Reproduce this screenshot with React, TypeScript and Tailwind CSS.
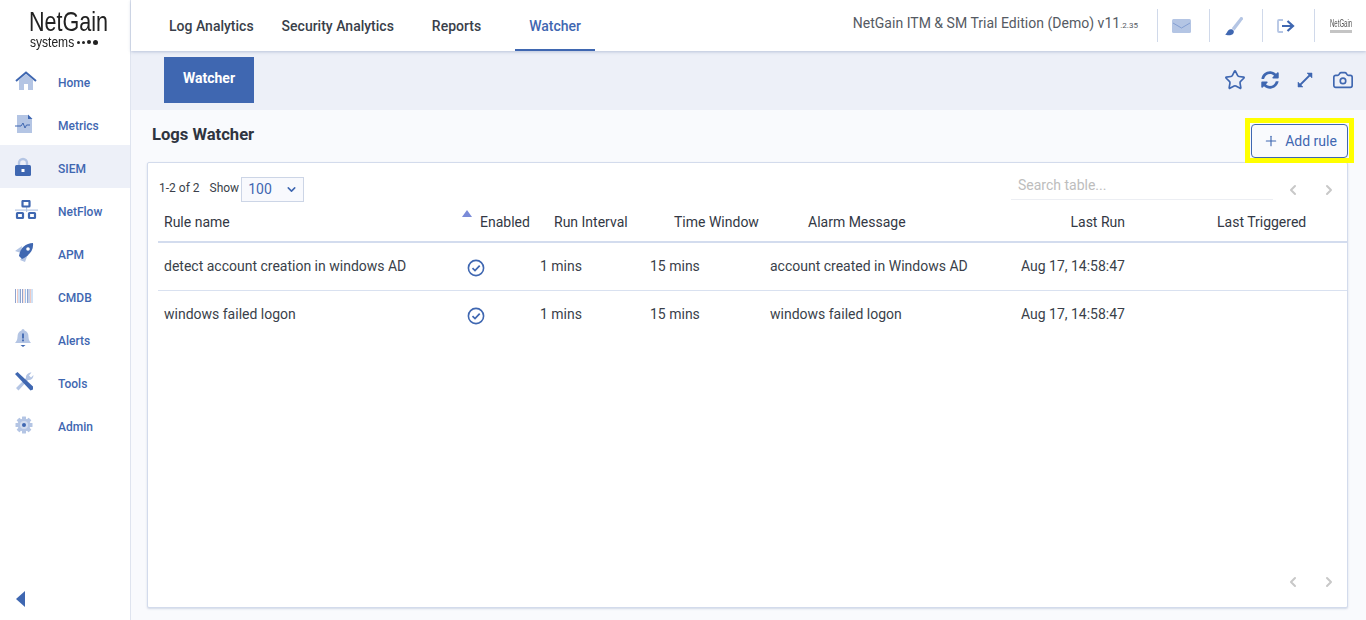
import React from "react";
import { Star, Camera, Plus, ChevronLeft, ChevronRight, ChevronDown } from "lucide-react";
import { FaSyncAlt } from "react-icons/fa";

const B = "#3f67b1";
const L = "#b4c5e4";

const HomeI = () => (
  <svg width="22" height="20" viewBox="0 0 22 20">
    <path d="M4 9 L11 3 L18 9 V19 H13 V13 H9 V19 H4 Z" fill={L} />
    <path d="M1 10 L11 1.5 L21 10" fill="none" stroke={B} strokeWidth="2" />
  </svg>
);
const MetricsI = () => (
  <svg width="22" height="20" viewBox="0 0 22 20">
    <path d="M2 1 H13 L17 5 V19 H2 Z" fill={L} />
    <path d="M13 0.5 L17.5 5 H13 Z" fill={B} />
    <path d="M0 12 H6 L8 9 L10 14 L11.5 11 H15" fill="none" stroke={B} strokeWidth="1" />
  </svg>
);
const LockI = () => (
  <svg width="22" height="20" viewBox="0 0 22 20">
    <path d="M4 9 V6 a4 4 0 0 1 8 0 V9" fill="none" stroke={L} strokeWidth="2.4" />
    <rect x="0" y="8" width="16" height="11" rx="1.5" fill={B} />
    <rect x="6.5" y="12" width="3" height="3" fill="#fff" />
  </svg>
);
const NetI = () => (
  <svg width="24" height="20" viewBox="0 0 24 20">
    <rect x="0" y="9.5" width="23" height="1.2" fill={L} />
    <rect x="11" y="6" width="1.2" height="6" fill={L} />
    <rect x="7.5" y="1" width="7" height="5.5" rx="0.5" fill="#fff" stroke={B} strokeWidth="2.2" />
    <rect x="2" y="13" width="6" height="5" rx="0.5" fill="#fff" stroke={B} strokeWidth="2.2" />
    <rect x="14" y="13" width="6" height="5" rx="0.5" fill="#fff" stroke={B} strokeWidth="2.2" />
  </svg>
);
const RocketI = () => (
  <svg width="22" height="20" viewBox="0 0 22 20">
    <path d="M0 8 L7 3 L6 10 Z M9 12 L13 11 L10 19 L5 17 Z" fill={L} />
    <path d="M4 13 C5 5 11 0 18 0 C19 7 14 13 7 16 Z" fill={B} />
    <circle cx="13" cy="6" r="1.8" fill="#fff" />
  </svg>
);
const BarI = () => (
  <svg width="22" height="14" viewBox="0 0 22 14">
    {[0, 2, 3.5, 5, 7, 8.5, 10, 12, 13.5, 15, 16.5].map((x, i) => (
      <rect key={x} x={x} y="0" width="1" height="14" fill={["#8fa3cf", "#f0c8c0", "#9fc4ee", "#8fa3cf"][i % 4]} />
    ))}
  </svg>
);
const BellI = () => (
  <svg width="22" height="20" viewBox="0 0 22 20">
    <path d="M6.5 1.5 a1.5 1.5 0 0 1 3 0 C12.5 2.5 13.5 5 13.5 8 C13.5 11 15 13 16 14 H0 C1 13 2.5 11 2.5 8 C2.5 5 3.5 2.5 6.5 1.5 Z" fill={L} />
    <rect x="7.1" y="4.5" width="1.8" height="5" fill={B} />
    <rect x="7.1" y="10.5" width="1.8" height="1.8" fill={B} />
    <path d="M5.5 16 H10.5 L8 18 Z" fill={B} />
  </svg>
);
const ToolsI = () => (
  <svg width="22" height="20" viewBox="0 0 22 20">
    <path d="M1 16 L11 6 C10.5 3 13 0.5 16.5 0.5 L14 3.5 L16 5.5 L18.5 3 C18.5 6.5 16 8.5 13 8 L3.5 18.5 Z" fill={L} />
    <path d="M0 2 L2.5 0 L18 14.5 L18 17.5 L15.5 18.5 Z" fill={B} />
  </svg>
);
const GearI = () => (
  <svg width="22" height="20" viewBox="0 0 22 20">
    <g fill={L}>
      <circle cx="9" cy="10" r="6.5" />
      {[0, 45, 90, 135].map((a) => (
        <rect key={a} x="7" y="1.5" width="4" height="17" transform={`rotate(${a} 9 10)`} rx="0.5" />
      ))}
    </g>
    <circle cx="9" cy="10" r="4" fill="#fff" fillOpacity="0.4" />
    <circle cx="9" cy="10" r="2" fill={B} />
  </svg>
);

const nav: [string, React.FC, boolean?][] = [
  ["Home", HomeI],
  ["Metrics", MetricsI],
  ["SIEM", LockI, true],
  ["NetFlow", NetI],
  ["APM", RocketI],
  ["CMDB", BarI],
  ["Alerts", BellI],
  ["Tools", ToolsI],
  ["Admin", GearI],
];

const Check = () => (
  <svg width="18" height="18" viewBox="0 0 18 18" fill="none">
    <circle cx="9" cy="9" r="7.6" stroke={B} strokeWidth="1.6" />
    <path d="M5.5 9.2 L8 11.6 L12.7 6.6" stroke={B} strokeWidth="1.7" />
  </svg>
);

const rows = [
  ["detect account creation in windows AD", "account created in Windows AD"],
  ["windows failed logon", "windows failed logon"],
];

const cols = "grid grid-cols-[302px_80px_110px_120px_230px_135px_212px]";

export default function App() {
  return (
    <div className="flex h-[620px] w-[1366px] overflow-hidden bg-white font-['Roboto',sans-serif] text-[14px] text-[#3a3f4a]">
      <aside className="flex w-[131px] shrink-0 flex-col border-r border-[#dfe4ef] bg-white">
        <div className="flex h-[59px] flex-col items-start pt-[8px] pl-[29px] leading-none text-[#222]">
          <span className="block w-[78px] origin-left scale-x-[.77] whitespace-nowrap font-['Liberation_Sans',sans-serif] text-[28px] leading-[28px]">NetGain</span>
          <span className="ml-[1px] flex items-center font-['Liberation_Sans',sans-serif] text-[14px] leading-[12px]">
            <span className="block w-[47px] origin-left scale-x-[.86] whitespace-nowrap">systems</span>
            <span className="flex items-center gap-[2px]">
              <i className="h-[3px] w-[3px] rounded-full bg-[#222]" />
              <i className="h-[3px] w-[3px] rounded-full bg-[#222]" />
              <i className="h-[4px] w-[4px] rounded-full bg-[#222]" />
              <i className="h-[5px] w-[5px] rounded-full bg-[#222]" />
            </span>
          </span>
        </div>
        <nav className="flex flex-col">
          {nav.map(([label, Icon, active]) => (
            <div key={label} className={`flex h-[43px] items-center pl-[15px] ${active ? "bg-[#edf0f8]" : ""}`}>
              <span className="flex w-[43px] items-center">
                <Icon />
              </span>
              <span className="pt-[5px] text-[12px] font-medium text-[#3f67b1]">{label}</span>
            </div>
          ))}
        </nav>
        <div className="mt-auto pb-[13px] pl-[16px]">
          <svg width="10" height="16" viewBox="0 0 10 16">
            <path d="M9 0 V16 L0 8 Z" fill={B} />
          </svg>
        </div>
      </aside>

      <div className="flex min-w-0 flex-1 flex-col">
        <header className="z-10 flex h-[51px] shrink-0 items-center bg-white pl-[38px] shadow-[0_1px_3px_rgba(120,140,180,0.45)]">
          <div className="flex h-full items-center text-[14px] font-medium text-[#3a3f4a]">
            <span className="mr-[28px] pt-[1px]">Log Analytics</span>
            <span className="mr-[38px] pt-[1px]">Security Analytics</span>
            <span className="mr-[34px] pt-[1px]">Reports</span>
            <span className="flex h-full w-[80px] items-center justify-center border-b-2 border-[#3f67b1] pt-[3px] text-[#3f67b1]">Watcher</span>
          </div>
          <div className="ml-auto flex h-full items-center">
            <span className="mr-[19px] pb-[5px] text-[14px] tracking-[0.02px] text-[#555a63]">
              NetGain ITM &amp; SM Trial Edition (Demo) v11<span className="text-[8px]">.2.35</span>
            </span>
            <div className="flex h-[33px] w-[52px] items-center justify-center border-l border-[#d0d9ea] pr-[5px]">
              <svg width="19" height="14" viewBox="0 0 19 14">
                <rect width="19" height="14" rx="1.5" fill={L} />
                <path d="M1 4 L9.5 9 L18 4" fill="none" stroke="#7f9bd0" strokeWidth="0.9" />
              </svg>
            </div>
            <div className="flex h-[33px] w-[53px] items-center justify-center border-l border-[#d0d9ea] pr-[5px]">
              <svg width="20" height="20" viewBox="0 0 18 18">
                <path d="M7 11 L15 1 C16.5 0.5 17.5 1.5 17 3 L9.5 13 Z" fill={L} />
                <path d="M1 16.5 C3 16 3 12 6 12 C8.5 12 9.5 14 8.5 15.5 C7.5 17.5 3 18 1 16.5 Z" fill={B} />
              </svg>
            </div>
            <div className="flex h-[33px] w-[52px] items-center justify-center border-l border-[#d0d9ea] pr-[5px]">
              <svg width="18" height="14" viewBox="0 0 18 14" fill="none">
                <path d="M6 1 H2 a1 1 0 0 0 -1 1 V12 a1 1 0 0 0 1 1 H6" stroke={L} strokeWidth="1.8" />
                <path d="M5 7 H15 M10.5 2 L16 7 L10.5 12" stroke={B} strokeWidth="2.2" />
              </svg>
            </div>
            <div className="flex h-[33px] w-[52px] flex-col items-center justify-center border-l border-[#d0d9ea] leading-none">
              <span className="block w-[22px] origin-left scale-x-[.55] whitespace-nowrap font-['Liberation_Sans',sans-serif] text-[11px] leading-[11px] text-[#555] blur-[0.4px]">NetGain</span>
              <span className="mt-[1px] h-[3px] w-[22px] bg-[#c4c4c4] blur-[0.6px]" />
            </div>
          </div>
        </header>

        <div className="flex h-[59px] shrink-0 items-start bg-[#edf0f8] pl-[33px] pr-[12px]">
          <div className="mt-[6px] flex h-[46px] w-[90px] items-center justify-center bg-[#3f67b1] pb-[4px] text-[14px] font-bold text-white">Watcher</div>
          <div className="ml-auto mt-[18px] flex items-center text-[#3f67b1]">
            <Star size={22} strokeWidth={1.8} />
            <span className="ml-[14px] flex h-[22px] w-[20px] items-center justify-center"><FaSyncAlt size={18} /></span>
            <span className="ml-[15px] flex h-[22px] w-[20px] items-center justify-center">
              <svg width="20" height="20" viewBox="0 0 20 20" fill="none" stroke={B} strokeWidth="1.8">
                <path d="M5 15 L15 5" />
                <path d="M12 3 H17 V8 Z M3 12 V17 H8 Z" fill={B} strokeWidth="0.5" />
              </svg>
            </span>
            <Camera className="ml-[17px]" size={22} strokeWidth={1.8} />
          </div>
        </div>

        <main className="flex min-h-0 flex-1 flex-col bg-[#f9fafd] pl-[16px] pr-[18px]">
          <div className="relative h-[52px] shrink-0">
            <h1 className="pl-[5px] pt-[14px] text-[16.6px] font-bold leading-[21px] text-[#2f3440]">Logs Watcher</h1>
            <div className="absolute right-[-6px] top-[8px] h-[45px] w-[109px] border-[5px] border-[#ffff00] px-[1px] pt-[1px]">
              <button className="flex h-[34px] w-[97px] items-center justify-center gap-[6px] rounded-[4px] border border-[#3f67b1] pl-[1px] text-[14px] text-[#3f67b1]">
                <Plus size={16} strokeWidth={1.7} />
                Add rule
              </button>
            </div>
          </div>

          <section className="mb-[12px] flex min-h-0 flex-1 flex-col rounded-[2px] border border-[#d3dbec] bg-white pl-[10px] shadow-[0_1px_2px_rgba(120,140,180,0.3)]">
            <div className="flex h-[42px] shrink-0 items-start pt-[14px]">
              <span className="ml-[1px] pt-[2px] text-[12px] leading-[18px]">1-2 of 2</span>
              <span className="ml-[10px] pt-[2px] text-[12px] leading-[18px]">Show</span>
              <span className="ml-[2px] flex h-[25px] w-[63px] items-center justify-between border border-[#ccd5e6] bg-[#f8f9fd] pl-[6px] pr-[5px] text-[14px] text-[#3f67b1]">
                100
                <ChevronDown size={13} strokeWidth={2.8} />
              </span>
              <div className="ml-auto flex items-start">
                <span className="mt-[-4px] h-[27px] w-[262px] border-b border-[#eceef3] pl-[7px] text-[14px] leading-[24px] text-[#bdbdbd]">Search table...</span>
                <div className="ml-[12px] flex w-[62px] items-center gap-[20px] pt-[5px] text-[#c8c8c8]">
                  <ChevronLeft size={16} strokeWidth={3} />
                  <ChevronRight size={16} strokeWidth={3} />
                </div>
              </div>
            </div>

            <div className={`${cols} h-[38px] shrink-0 items-center border-b-2 border-[#d3dcee] pb-[1px] font-normal text-[#333844]`}>
              <span className="pl-[6px]">Rule name</span>
              <span className="relative pl-[20px]">
                <i className="absolute left-[2px] top-[-2px] h-0 w-0 border-x-[5px] border-b-[7px] border-x-transparent border-b-[#7a8bd8]" />
                Enabled
              </span>
              <span className="pl-[14px]">Run Interval</span>
              <span className="pl-[24px]">Time Window</span>
              <span className="pl-[38px]">Alarm Message</span>
              <span className="pr-[10px] text-right">Last Run</span>
              <span className="pl-[82px]">Last Triggered</span>
            </div>

            {rows.map(([name, msg], i) => (
              <div key={name} className={`${cols} h-[48px] shrink-0 items-center border-b ${i === 0 ? "border-[#d9e1f0]" : "border-transparent"}`}>
                <span className="pl-[6px]">{name}</span>
                <span className="pl-[7px] pt-[3px]"><Check /></span>
                <span>1 mins</span>
                <span>15 mins</span>
                <span>{msg}</span>
                <span className="pr-[10px] text-right">Aug 17, 14:58:47</span>
                <span />
              </div>
            ))}

            <div className="mt-auto flex shrink-0 justify-end gap-[20px] pb-[17px] pr-[10px] text-[#c8c8c8]">
              <ChevronLeft size={16} strokeWidth={3} />
              <ChevronRight size={16} strokeWidth={3} />
            </div>
          </section>
        </main>
      </div>
    </div>
  );
}
